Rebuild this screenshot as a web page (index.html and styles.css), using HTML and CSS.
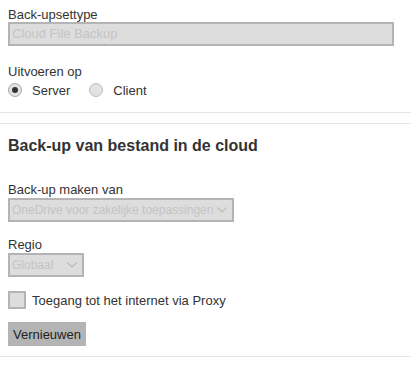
FILE: index.html
```html
<!DOCTYPE html>
<html lang="nl">

<head>
    <meta charset="UTF-8">
    <meta name="viewport" content="width=device-width, initial-scale=1.0">
    <title>Back-up instellingen</title>
    <link rel="stylesheet" href="styles.css">
</head>

<body>
    <div class="page">
        <section class="block block-top">
            <div class="field">
                <div class="label">Back-upsettype</div>
                <div class="input wide">Cloud File Backup</div>
            </div>
            <div class="field">
                <div class="label">Uitvoeren op</div>
                <div class="radios">
                    <span class="radio"><span class="dot on"></span>Server</span>
                    <span class="radio"><span class="dot"></span>Client</span>
                </div>
            </div>
        </section>

        <section class="block block-cloud">
            <h2 class="title">Back-up van bestand in de cloud</h2>
            <div class="field">
                <div class="label">Back-up maken van</div>
                <div class="select sel-source">
                    <span>OneDrive voor zakelijke toepassingen</span>
                    <svg class="chev" width="10" height="6" viewBox="0 0 10 6">
                        <polyline points="0.5,0.5 5,5 9.5,0.5" fill="none" stroke="#bcbcbc" stroke-width="1.2" />
                    </svg>
                </div>
            </div>
            <div class="field">
                <div class="label">Regio</div>
                <div class="select sel-region">
                    <span>Globaal</span>
                    <svg class="chev" width="10" height="6" viewBox="0 0 10 6">
                        <polyline points="0.5,0.5 5,5 9.5,0.5" fill="none" stroke="#bcbcbc" stroke-width="1.2" />
                    </svg>
                </div>
            </div>
            <div class="check-row">
                <span class="checkbox"></span>
                <span>Toegang tot het internet via Proxy</span>
            </div>
            <button class="btn" type="button">Vernieuwen</button>
        </section>
    </div>
</body>

</html>
```

FILE: styles.css
```css
html,
body {
    padding: 0;
    margin: 0;
}

body {
    font-family: "Liberation Sans", Arial, sans-serif;
    font-size: 13px;
    line-height: 15px;
    color: #333;
    background: #fff;
}

.block {
    padding: 0 8px;
    border-bottom: 1px solid #e5e5e5;
}

.block-top {
    padding-top: 7px;
    padding-bottom: 15px;
}

.block-cloud {
    margin-top: 10px;
    border-top: 1px solid #e5e5e5;
    padding-top: 12px;
    padding-bottom: 10px;
}

.field + .field {
    margin-top: 18px;
}

.block-cloud .title + .field {
    margin-top: 27px;
}

.block-cloud .field + .field {
    margin-top: 15px;
}

.title {
    margin: 0;
    font-size: 16px;
    line-height: 19px;
    font-weight: bold;
    color: #333;
}

.input {
    box-sizing: border-box;
    height: 24px;
    padding: 0 2px;
    background: #ddd;
    border: 2px solid #b4b4b4;
    color: #c4c4c4;
    line-height: 20px;
    white-space: nowrap;
}

.wide {
    width: 386px;
}

.radios {
    display: flex;
    align-items: center;
    gap: 19px;
    margin-top: 4px;
    height: 14px;
}

.radio {
    display: flex;
    align-items: center;
    gap: 10px;
}

.dot {
    box-sizing: border-box;
    width: 14px;
    height: 14px;
    border-radius: 50%;
    border: 1px solid #bdbdbd;
    background: #e2e2e2;
    display: flex;
    align-items: center;
    justify-content: center;
}

.dot.on {
    border-color: #a8a8a8;
}

.dot.on::after {
    content: "";
    width: 6px;
    height: 6px;
    border-radius: 50%;
    background: #333;
}

.select {
    box-sizing: border-box;
    height: 24px;
    margin-top: 1px;
    padding: 0 5px 0 2px;
    background: #ddd;
    border: 2px solid #b4b4b4;
    color: #c4c4c4;
    font-size: 12px;
    white-space: nowrap;
    display: flex;
    align-items: center;
    justify-content: space-between;
}

.sel-source {
    width: 226px;
}

.sel-region {
    width: 76px;
}

.chev {
    display: block;
    flex: none;
}

.check-row {
    display: flex;
    align-items: center;
    gap: 6px;
    margin-top: 14px;
}

.checkbox {
    box-sizing: border-box;
    width: 18px;
    height: 18px;
    background: #ddd;
    border: 2px solid #b4b4b4;
}

.btn {
    display: block;
    margin-top: 13px;
    height: 24px;
    padding: 0 5px;
    border: 0;
    background: #b4b4b4;
    color: #222;
    font-family: inherit;
    font-size: 13px;
}
```
